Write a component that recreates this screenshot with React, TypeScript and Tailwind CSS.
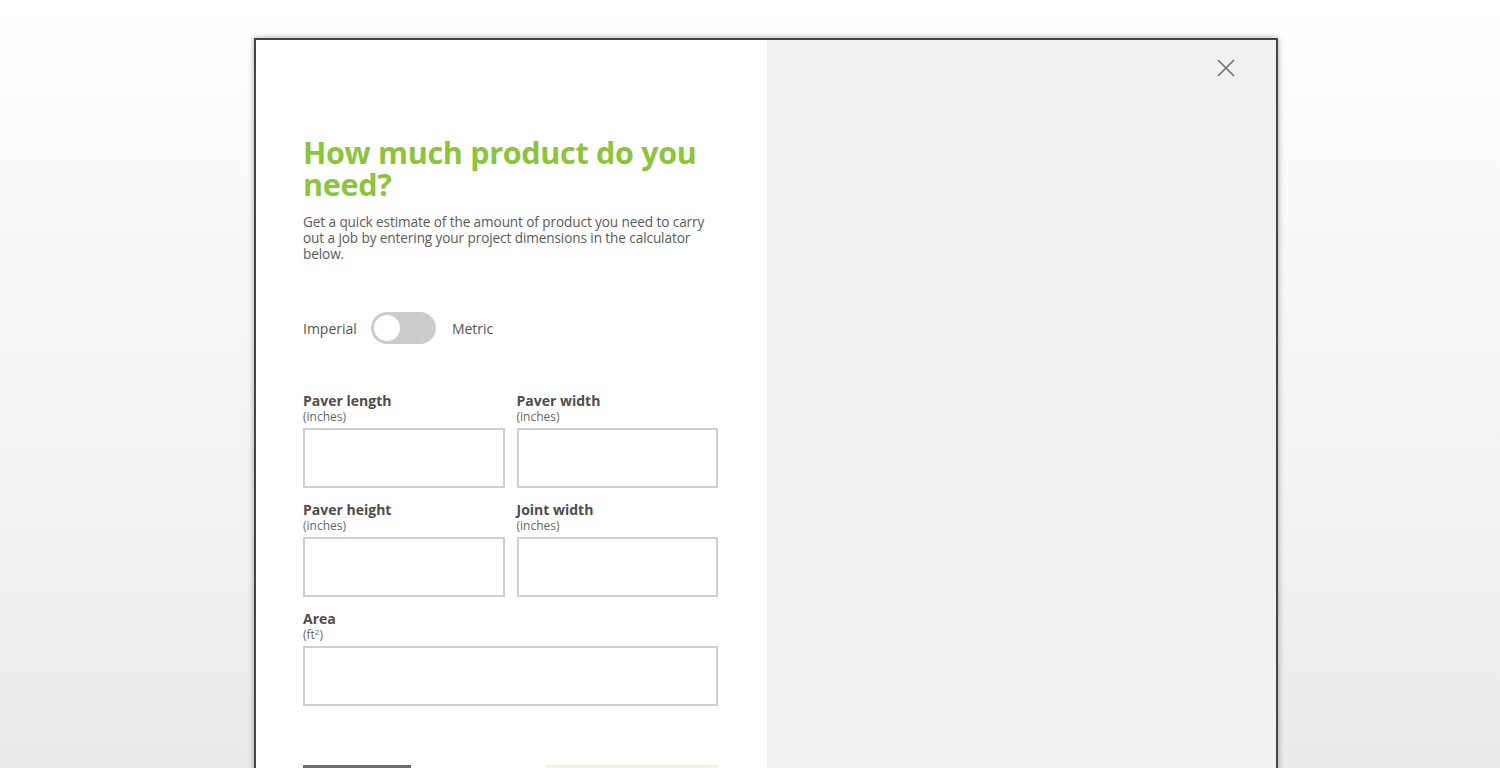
import React, { useState } from "react";

function Field({ label, unit, wide }: { label: string; unit: React.ReactNode; wide?: boolean }) {
  return (
    <div className={wide ? "col-span-2" : ""}>
      <div className="text-[14px] font-bold leading-[18px] text-[#4d4d4d]">{label}</div>
      <div className="text-[12px] leading-[14px] text-[#666]">{unit}</div>
      <input
        type="text"
        className="mt-[4px] block h-[60px] w-full border-2 border-[#cfcfcf] bg-white px-3 outline-none"
      />
    </div>
  );
}

export default function App() {
  const [metric, setMetric] = useState(false);

  return (
    <div
      className="min-h-screen w-full overflow-hidden bg-gradient-to-b from-white to-[#ece9e9] pt-[38px]"
      style={{ fontFamily: '"Open Sans", "Noto Sans", sans-serif' }}
    >
      <div className="mx-auto flex h-[760px] w-[1024px] translate-x-[16px] border-2 border-b-0 border-[#454545] shadow-[0_0_6px_rgba(0,0,0,0.35)]">
        {/* left form panel */}
        <div className="w-[511px] shrink-0 bg-white pl-[47px] pr-[49px] pt-[96px]">
          <h1 className="text-[30.5px] font-bold leading-[32px] tracking-[-0.3px] text-[#8cc43c]">
            How much product do you need?
          </h1>
          <p className="mt-[14px] text-[13.6px] leading-[16px] tracking-[-0.1px] text-[#5a5a5a]">
            Get a quick estimate of the amount of product you need to carry out a job by entering your project
            dimensions in the calculator below.
          </p>

          <div className="mt-[50px] flex items-center text-[14px] text-[#555]">
            <span>Imperial</span>
            <button
              onClick={() => setMetric(!metric)}
              className="relative ml-[14px] mr-[16px] h-[32px] w-[65px] rounded-full bg-[#cccccc]"
            >
              <span
                className={`absolute top-[3px] h-[26px] w-[26px] rounded-full bg-white transition-all ${
                  metric ? "left-[36px]" : "left-[3px]"
                }`}
              />
            </button>
            <span>Metric</span>
          </div>

          <div className="mt-[48px] grid grid-cols-2 gap-x-[12px] gap-y-[13px]">
            <Field label="Paver length" unit="(inches)" />
            <Field label="Paver width" unit="(inches)" />
            <Field label="Paver height" unit="(inches)" />
            <Field label="Joint width" unit="(inches)" />
            <Field
              label="Area"
              wide
              unit={
                <>
                  (ft<sup className="text-[8px] text-[#666]">2</sup>)
                </>
              }
            />
          </div>

          <div className="mt-[59px] flex justify-between">
            <button className="h-[40px] w-[108px] bg-[#6b6b6b]" />
            <button className="h-[40px] w-[172px] bg-[#eef5e2]" />
          </div>
        </div>

        {/* right panel */}
        <div className="relative flex-1 bg-[#f1f1f1]">
          <button className="absolute right-[41px] top-[19px] text-[#6e6e6e]">
            <svg width="18" height="18" viewBox="0 0 18 18" fill="none" stroke="currentColor" strokeWidth="1.6">
              <path d="M1 1L17 17M17 1L1 17" />
            </svg>
          </button>
        </div>
      </div>
    </div>
  );
}
